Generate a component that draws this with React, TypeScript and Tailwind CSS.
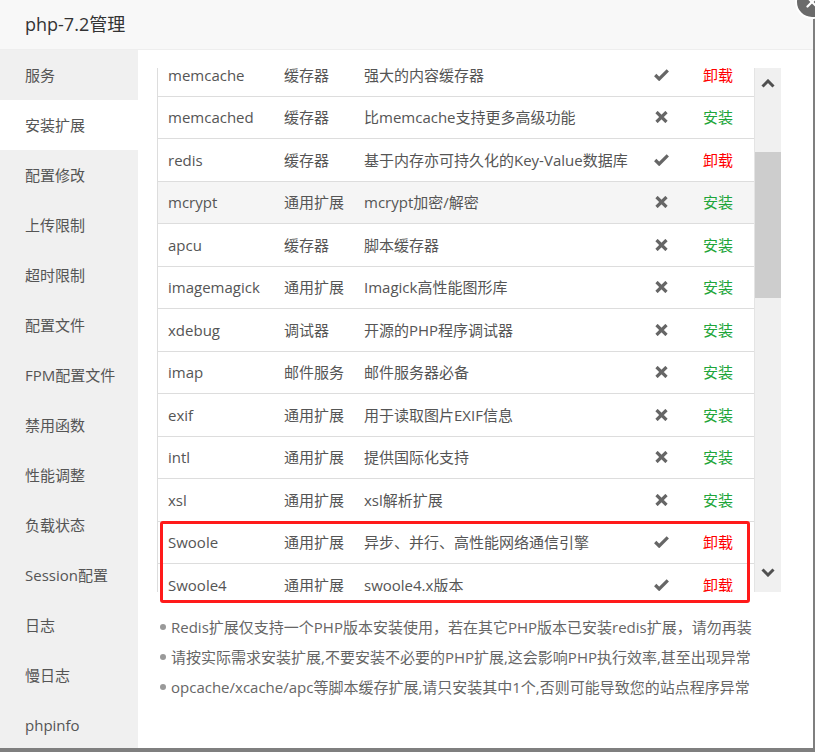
import { X } from 'lucide-react';

type Ext = {
  name: string;
  type: string;
  desc: string;
  installed: boolean;
  hover?: boolean;
};

const menu = [
  '服务',
  '安装扩展',
  '配置修改',
  '上传限制',
  '超时限制',
  '配置文件',
  'FPM配置文件',
  '禁用函数',
  '性能调整',
  '负载状态',
  'Session配置',
  '日志',
  '慢日志',
  'phpinfo',
];

const extensions: Ext[] = [
  { name: 'memcache', type: '缓存器', desc: '强大的内容缓存器', installed: true },
  { name: 'memcached', type: '缓存器', desc: '比memcache支持更多高级功能', installed: false },
  { name: 'redis', type: '缓存器', desc: '基于内存亦可持久化的Key-Value数据库', installed: true },
  { name: 'mcrypt', type: '通用扩展', desc: 'mcrypt加密/解密', installed: false, hover: true },
  { name: 'apcu', type: '缓存器', desc: '脚本缓存器', installed: false },
  { name: 'imagemagick', type: '通用扩展', desc: 'Imagick高性能图形库', installed: false },
  { name: 'xdebug', type: '调试器', desc: '开源的PHP程序调试器', installed: false },
  { name: 'imap', type: '邮件服务', desc: '邮件服务器必备', installed: false },
  { name: 'exif', type: '通用扩展', desc: '用于读取图片EXIF信息', installed: false },
  { name: 'intl', type: '通用扩展', desc: '提供国际化支持', installed: false },
  { name: 'xsl', type: '通用扩展', desc: 'xsl解析扩展', installed: false },
  { name: 'Swoole', type: '通用扩展', desc: '异步、并行、高性能网络通信引擎', installed: true },
  { name: 'Swoole4', type: '通用扩展', desc: 'swoole4.x版本', installed: true },
];

const notes = [
  'Redis扩展仅支持一个PHP版本安装使用，若在其它PHP版本已安装redis扩展，请勿再装',
  '请按实际需求安装扩展,不要安装不必要的PHP扩展,这会影响PHP执行效率,甚至出现异常',
  'opcache/xcache/apc等脚本缓存扩展,请只安装其中1个,否则可能导致您的站点程序异常',
];

const OkIcon = () => (
  <svg width="15" height="12" viewBox="0 0 15 12">
    <path d="M1.2 6 L5.2 10 L13.8 1.4" fill="none" stroke="#666" strokeWidth="3.2" />
  </svg>
);

const RemoveIcon = () => (
  <svg width="13" height="12" viewBox="0 0 13 12">
    <path d="M1.5 1 L11.5 11 M11.5 1 L1.5 11" fill="none" stroke="#666" strokeWidth="3.2" />
  </svg>
);

const Chevron = ({ up }: { up: boolean }) => (
  <svg width="14" height="9" viewBox="0 0 14 9">
    <path
      d={up ? 'M1.5 7.5 L7 2 L12.5 7.5' : 'M1.5 1.5 L7 7 L12.5 1.5'}
      fill="none"
      stroke="#505050"
      strokeWidth="3"
    />
  </svg>
);

const App = () => {
  return (
    <div
      className="relative w-[815px] h-[752px] bg-[#7f7f7f] overflow-hidden"
      style={{ fontFamily: '"Open Sans", "Noto Sans CJK SC", sans-serif' }}
    >
      <div className="w-[813px] h-[748px] bg-white flex flex-col overflow-hidden">
        {/* Header */}
        <div className="h-[50px] shrink-0 bg-[#f8f8f8] border-b border-[#eee] pl-[25px] flex items-center text-[18px] text-[#333]">
          php-7.2管理
        </div>

        <div className="flex flex-1 min-h-0">
          {/* Sidebar */}
          <div className="w-[138px] shrink-0 bg-[#f0f0f0] flex flex-col">
            {menu.map((item) => (
              <div
                key={item}
                className={`h-[50px] shrink-0 pl-[25px] flex items-center text-[15px] text-[#555] ${
                  item === '安装扩展' ? 'bg-white' : ''
                }`}
              >
                {item}
              </div>
            ))}
          </div>

          {/* Content */}
          <div className="flex-1 pl-[19px] pt-[18px] pr-[32px]">
            <div className="relative flex h-[524px]">
              <div className="w-[597px] border-l border-[#ddd] overflow-hidden">
                <div className="-mt-[14px]">
                  {extensions.map((ext) => (
                    <div
                      key={ext.name}
                      className={`h-[42.5px] flex items-center border-b border-[#ddd] text-[15px] text-[#555] ${
                        ext.hover ? 'bg-[#f5f5f5]' : ''
                      }`}
                    >
                      <div className="w-[126px] pl-[10px]">{ext.name}</div>
                      <div className="w-[80px]">{ext.type}</div>
                      <div className="w-[280px] whitespace-nowrap">{ext.desc}</div>
                      <div className="w-[34px] flex justify-center">
                        {ext.installed ? <OkIcon /> : <RemoveIcon />}
                      </div>
                      <div className="flex-1 pl-[25px]">
                        {ext.installed ? (
                          <span className="text-[#f00]">卸载</span>
                        ) : (
                          <span className="text-[#20a53a]">安装</span>
                        )}
                      </div>
                    </div>
                  ))}
                </div>
              </div>

              {/* Scrollbar */}
              <div className="w-[27px] bg-[#f0f0f0] border-l border-[#e4e4e4] flex flex-col">
                <div className="h-[20px] flex items-end justify-center">
                  <Chevron up />
                </div>
                <div className="h-[64px]" />
                <div className="h-[146px] bg-[#cdcdcd]" />
                <div className="flex-1" />
                <div className="h-[24px] flex items-start justify-center">
                  <Chevron up={false} />
                </div>
              </div>

              {/* Highlight box */}
              <div className="absolute left-[3px] top-[453px] w-[590px] h-[82px] border-[3px] border-[#ff1a1a] rounded-[3px]" />
            </div>

            {/* Notes */}
            <ul className="mt-[20px] text-[15px] text-[#666]">
              {notes.map((note) => (
                <li key={note} className="h-[30px] flex items-center whitespace-nowrap">
                  <span className="w-[6px] h-[6px] rounded-full bg-[#999] ml-[3px] mr-[5px] shrink-0" />
                  {note}
                </li>
              ))}
            </ul>
          </div>
        </div>
      </div>

      {/* Close button */}
      <div className="absolute left-[795px] -top-[15px] w-[34px] h-[34px] rounded-full bg-[#6b6b6b] border-2 border-white flex items-center justify-center">
        <X className="w-[18px] h-[18px] text-white" strokeWidth={3} />
      </div>
    </div>
  );
};

export default App;
